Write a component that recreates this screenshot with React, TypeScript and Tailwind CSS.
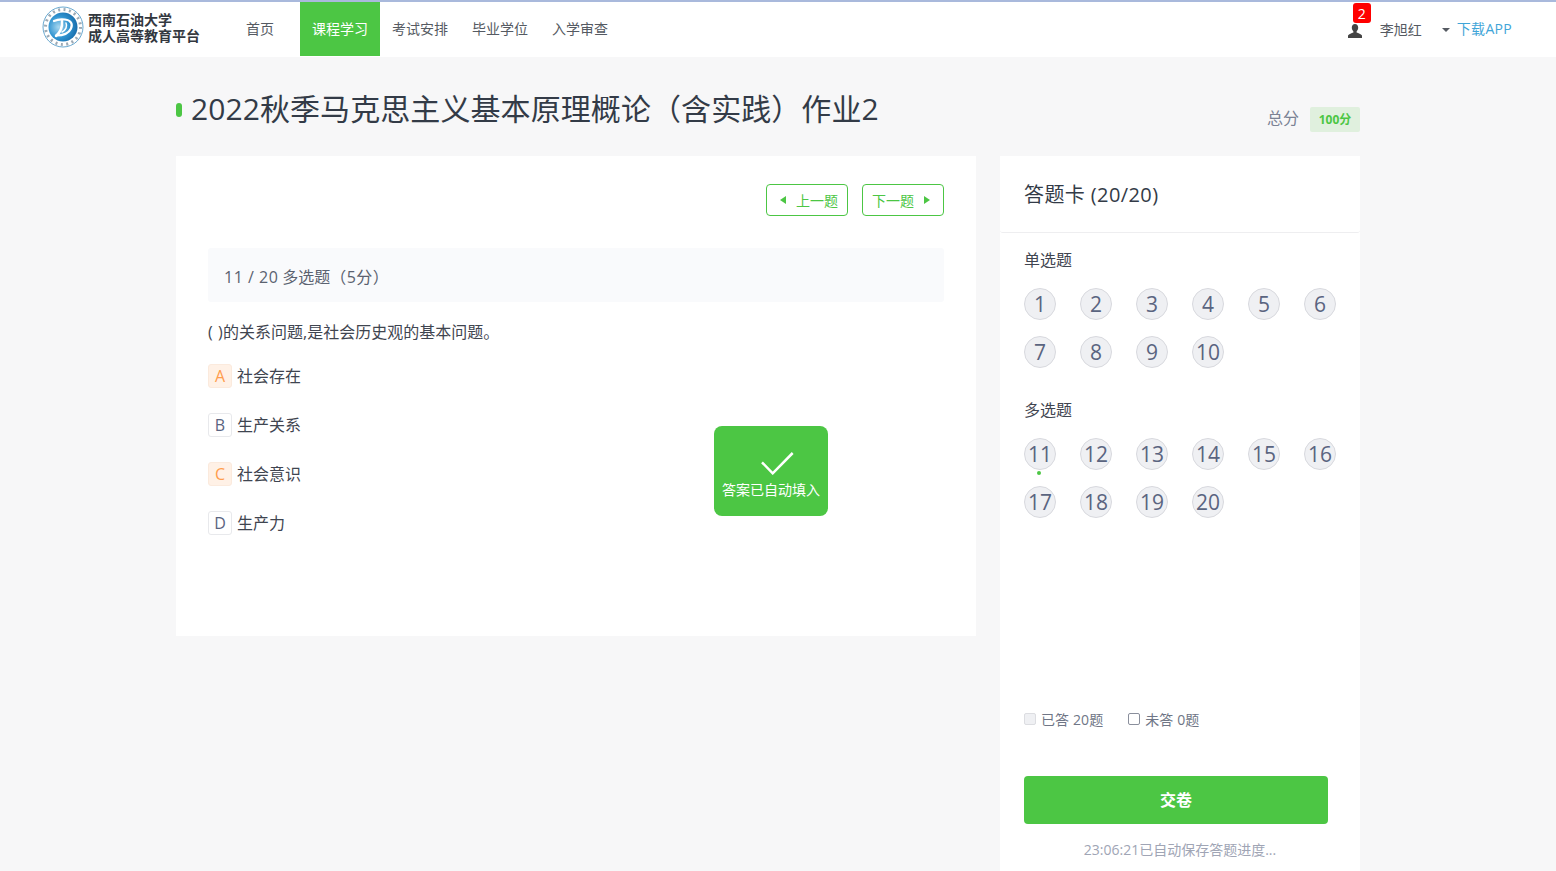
const font = "font-['Open_Sans','Noto_Sans_CJK_SC',sans-serif]";
const navItems = ["首页", "课程学习", "考试安排", "毕业学位", "入学审查"];
const options = [
  { key: "A", text: "社会存在", picked: true },
  { key: "B", text: "生产关系", picked: false },
  { key: "C", text: "社会意识", picked: true },
  { key: "D", text: "生产力", picked: false },
];
const single = [1, 2, 3, 4, 5, 6, 7, 8, 9, 10];
const multi = [11, 12, 13, 14, 15, 16, 17, 18, 19, 20];

function Logo() {
  return (
    <svg width="42" height="42" viewBox="0 0 42 42" className="shrink-0">
      <defs>
        <radialGradient id="logo-fill" cx="0.35" cy="0.5" r="0.75">
          <stop offset="0" stopColor="#a9d8f0" />
          <stop offset="0.5" stopColor="#2f93d0" />
          <stop offset="1" stopColor="#0f5f9e" />
        </radialGradient>
      </defs>
      <circle cx="21" cy="21" r="20" fill="#fff" stroke="#6aa9d0" strokeWidth="1" />
      <circle cx="21" cy="21" r="14.500" fill="url(#logo-fill)" />
      <circle cx="21" cy="21" r="17.500" fill="none" stroke="#4d6478" strokeWidth="3" strokeDasharray="2 3.500" opacity="0.55" />
      <g fill="none" stroke="#fff" strokeLinecap="round">
        <path d="M12 15c3-1.500 7-2 11-1.500 6 .7 8 4.500 6 9-2 4.500-7 7-15 7" strokeWidth="2.200" />
        <path d="M20 15c.5 5-1.500 11-6 15" strokeWidth="2.500" />
        <path d="M24 17c1.500 3 0 7-4 9" strokeWidth="1.500" />
      </g>
    </svg>
  );
}

function UserIcon() {
  return (
    <svg width="14" height="14" viewBox="0 0 14 14" className="block">
      <path
        d="M7 0c2 0 3.200 1.500 3.200 3.600 0 1.600-.7 3-1.600 3.800v1.100c1.800.8 4.400 1.500 5.400 3V14H0v-2.500c1-1.500 3.600-2.200 5.400-3V7.400C4.500 6.600 3.800 5.200 3.800 3.600 3.800 1.500 5 0 7 0z"
        fill="#444"
      />
    </svg>
  );
}

function Caret({ dir }: { dir: "left" | "right" }) {
  return (
    <svg width="6" height="8" viewBox="0 0 6 8">
      <path d={dir === "left" ? "M6 0v8L0 4z" : "M0 0v8l6-4z"} fill="#4cc644" />
    </svg>
  );
}

function NumberGrid({ items, current }: { items: number[]; current?: number }) {
  return (
    <div className="grid grid-cols-[repeat(6,32px)] gap-x-6 gap-y-4">
      {items.map((n) => (
        <div
          key={n}
          className="relative flex h-8 w-8 items-center justify-center rounded-full border border-[#d8d9de] bg-[#eff0f3] pt-[2px] text-[21px] text-[#5a6480]"
        >
          {n}
          {n === current && (
            <span className="absolute bottom-[-6px] left-[12px] h-1 w-1 rounded-full bg-[#4cc644]" />
          )}
        </div>
      ))}
    </div>
  );
}

export default function App() {
  return (
    <div className={`h-[871px] overflow-hidden bg-[#f7f7f8] ${font}`}>
      <header className="flex h-[57px] border-t-2 border-[#a9b9dc] bg-white">
        <div className="ml-[42px] flex w-[178px] items-center gap-1 pb-[5px]">
          <Logo />
          <div className="font-['Noto_Sans_CJK_SC',serif] text-[14px] leading-[16px] font-bold whitespace-nowrap text-[#33383f]">
            <div>西南石油大学</div>
            <div>成人高等教育平台</div>
          </div>
        </div>
        <nav className="flex">
          {navItems.map((item) => (
            <div
              key={item}
              className={`flex h-[54px] w-20 items-center justify-center pb-[2px] text-[14px] ${
                item === "课程学习" ? "bg-[#4cc644] text-white" : "text-[#555a62]"
              }`}
            >
              {item}
            </div>
          ))}
        </nav>
        <div className="ml-auto flex items-center pr-[44px] pb-[3px] text-[14px]">
          <div className="relative mt-[6px]">
            <UserIcon />
            <span className="absolute top-[-21px] left-[5px] flex h-5 w-[18px] items-center justify-center rounded-[3px] bg-[#ff0000] text-[14px] text-white">
              2
            </span>
          </div>
          <span className="mt-[2px] ml-[18px] text-[#555a62]">李旭红</span>
          <span className="mt-[3px] ml-5 h-0 w-0 border-x-4 border-t-4 border-x-transparent border-t-[#555a62]" />
          <span className="ml-[7px] tracking-[0.3px] text-[#3fa5d8]">下载APP</span>
        </div>
      </header>

      <main className="ml-[176px] w-[1184px]">
        <div className="flex h-[99px]">
          <span className="mt-[46px] h-[14px] w-[6px] rounded-full bg-[#4cc644]" />
          <h1 className="mt-[30px] ml-[9px] text-[30px] leading-[44px] tracking-[0.08px] text-[#333b47]">
            2022秋季马克思主义基本原理概论（含实践）作业2
          </h1>
          <div className="mt-[50px] ml-auto flex h-[25px] items-center">
            <span className="mb-[3px] text-[16px] text-[#7a8294]">总分</span>
            <span className="ml-[11px] flex h-[25px] w-[50px] items-center justify-center rounded-[2px] bg-[#e0f0de] text-[12px] font-bold text-[#4cc644]">
              100分
            </span>
          </div>
        </div>

        <div className="flex items-start gap-6">
          <section className="relative h-[480px] w-[800px] bg-white px-8 pt-7">
            <div className="flex justify-end gap-[14px]">
              <button className="flex h-8 w-[82px] items-center justify-center gap-[10px] rounded border border-[#4cc644] pl-1 text-[14px] text-[#4cc644]">
                <Caret dir="left" />
                <span>上一题</span>
              </button>
              <button className="flex h-8 w-[82px] items-center justify-center gap-[10px] rounded border border-[#4cc644] pr-1 text-[14px] text-[#4cc644]">
                <span>下一题</span>
                <Caret dir="right" />
              </button>
            </div>
            <div className="mt-8 flex h-[54px] items-center rounded-[3px] bg-[#f9fafc] px-4 pt-1 text-[16px] text-[#5b6270]">
              <span className="tracking-[0.5px]">11 / 20 </span>
              <span className="ml-1">多选题</span>
              <span className="tracking-[0.4px]">（5分）</span>
            </div>
            <p className="mt-[18px] text-[16px] leading-6 text-[#3f4550]">
              <span className="tracking-[0.5px]">( )</span>的关系问题,是社会历史观的基本问题。
            </p>
            <ul className="mt-5 flex flex-col gap-[25px]">
              {options.map((o) => (
                <li key={o.key} className="flex h-6 items-center gap-[5px] text-[16px] text-[#3f4550]">
                  <span
                    className={`flex h-6 w-6 items-center justify-center rounded-[3px] border text-[16px] ${
                      o.picked
                        ? "border-[#fbeadd] bg-[#fff1e6] text-[#ff9d4d]"
                        : "border-[#e8e9ec] bg-white text-[#5a6480]"
                    }`}
                  >
                    {o.key}
                  </span>
                  {o.text}
                </li>
              ))}
            </ul>
            <div className="absolute top-[270px] left-[538px] flex h-[90px] w-[114px] flex-col items-center rounded-lg bg-[#4cc644] text-white">
              <svg width="34" height="23" viewBox="0 0 34 23" className="mt-[26px] ml-[14px] shrink-0">
                <path d="M1 10.300 11.700 21.300 31.700 1" fill="none" stroke="#fff" strokeWidth="2.500" />
              </svg>
              <span className="mt-[5px] text-[14px] leading-5 whitespace-nowrap">答案已自动填入</span>
            </div>
          </section>

          <aside className="h-[760px] w-[360px] bg-white">
            <div className="flex h-[77px] items-center rounded-b-[3px] border-b border-[#eeeef0] px-6 pt-[2px] text-[20px] tracking-[0.4px] text-[#333b47]">
              答题卡 (20/20)
            </div>
            <div className="pl-6">
              <h2 className="mt-[15px] text-[16px] leading-6 text-[#3f4550]">单选题</h2>
              <div className="mt-[16px]">
                <NumberGrid items={single} />
              </div>
              <h2 className="mt-[30px] text-[16px] leading-6 text-[#3f4550]">多选题</h2>
              <div className="mt-[16px]">
                <NumberGrid items={multi} current={11} />
              </div>
              <div className="mt-[191px] flex h-5 items-center text-[14px] tracking-[0.1px] text-[#6f7686]">
                <span className="h-3 w-3 rounded-[2px] border border-[#dcdde1] bg-[#eff0f3]" />
                <span className="ml-[5px]">已答 20题</span>
                <span className="ml-[25px] h-3 w-3 rounded-[2px] border border-[#8a8f9c] bg-white" />
                <span className="ml-[5px]">未答 0题</span>
              </div>
              <button className="mt-[47px] flex h-12 w-[304px] items-center justify-center rounded bg-[#4cc644] text-[16px] font-bold text-white">
                交卷
              </button>
              <p className="mt-[16px] w-[312px] text-center text-[14px] leading-5 text-[#a0a5b5]">
                23:06:21已自动保存答题进度...
              </p>
            </div>
          </aside>
        </div>
      </main>
    </div>
  );
}
